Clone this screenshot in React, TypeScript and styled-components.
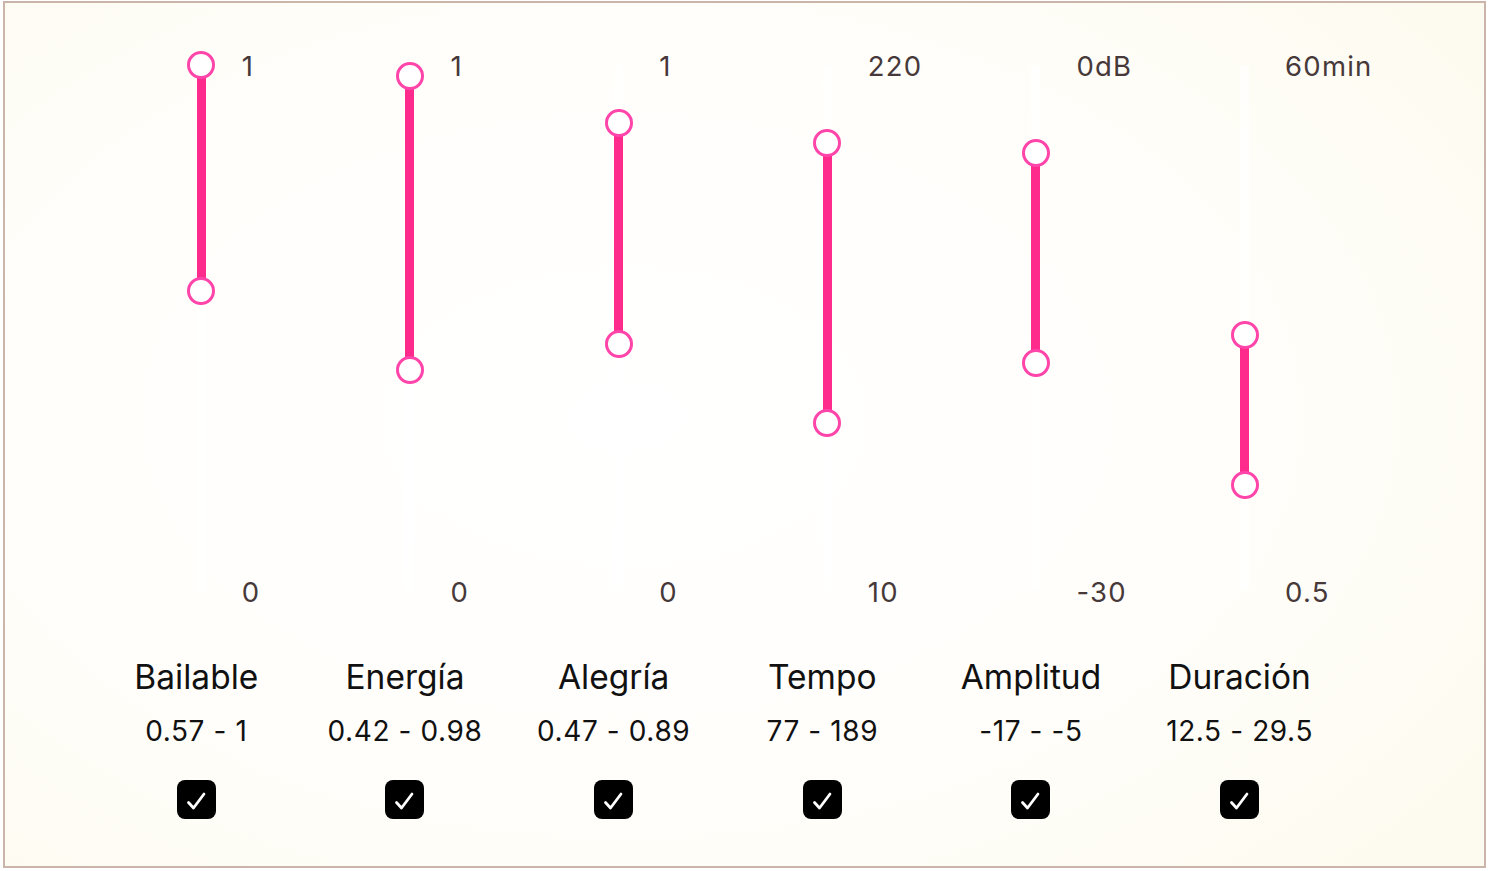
import styled, { createGlobalStyle } from 'styled-components';

interface Feature {
  name: string;
  min: number;
  max: number;
  minLabel: string;
  maxLabel: string;
  low: number;
  high: number;
}

const TRACK_HEIGHT = 526;

const features: Feature[] = [
  { name: 'Bailable', min: 0, max: 1, minLabel: '0', maxLabel: '1', low: 0.57, high: 1 },
  { name: 'Energía', min: 0, max: 1, minLabel: '0', maxLabel: '1', low: 0.42, high: 0.98 },
  { name: 'Alegría', min: 0, max: 1, minLabel: '0', maxLabel: '1', low: 0.47, high: 0.89 },
  { name: 'Tempo', min: 10, max: 220, minLabel: '10', maxLabel: '220', low: 77, high: 189 },
  { name: 'Amplitud', min: -30, max: 0, minLabel: '-30', maxLabel: '0dB', low: -17, high: -5 },
  { name: 'Duración', min: 0.5, max: 60, minLabel: '0.5', maxLabel: '60min', low: 12.5, high: 29.5 },
];

const GlobalStyle = createGlobalStyle`
  html, body {
    margin: 0;
    padding: 0;
    background: #ffffff;
  }
  body {
    font-family: Inter, "Noto Sans", "DejaVu Sans", sans-serif;
  }
`;

const Panel = styled.div`
  box-sizing: border-box;
  width: 1483px;
  height: 867px;
  margin: 1px 0 0 3px;
  border: 2px solid #cbb5aa;
  background: radial-gradient(
    ellipse 70% 75% at 42% 48%,
    #ffffff 0%,
    #fffefb 55%,
    #fdfbf0 100%
  );
`;

const Row = styled.div`
  display: flex;
  padding: 62px 0 0 87px;
`;

const Column = styled.div`
  width: 208.67px;
  display: flex;
  flex-direction: column;
  align-items: center;
`;

const SliderRow = styled.div`
  width: 100%;
  display: grid;
  grid-template-columns: calc(50% + 0.5px) 9px 1fr;
  height: ${TRACK_HEIGHT}px;
`;

const Track = styled.div`
  grid-column: 2;
  position: relative;
  height: 100%;
  border-radius: 5px;
  background: rgba(255, 255, 255, 0.7);
`;

const Fill = styled.div`
  position: absolute;
  left: 0;
  right: 0;
  background: #ff2b8c;
`;

const Thumb = styled.div`
  position: absolute;
  left: 50%;
  width: 28px;
  height: 28px;
  box-sizing: border-box;
  border: 3.5px solid #ff45a9;
  border-radius: 50%;
  background: #ffffff;
  transform: translate(-50%, -50%);
`;

const Scale = styled.div`
  grid-column: 3;
  display: flex;
  flex-direction: column;
  justify-content: space-between;
  align-items: flex-start;
  margin: -15px 0 -17px;
  padding-left: 36px;
`;

const ScaleLabel = styled.span`
  font-size: 27.5px;
  line-height: 32px;
  letter-spacing: 1.2px;
  color: #47393a;
`;

const Title = styled.div`
  margin-top: 67px;
  font-size: 33.5px;
  line-height: 38px;
  color: #111111;
`;

const Range = styled.div`
  margin-top: 18px;
  font-size: 28px;
  line-height: 34px;
  letter-spacing: 0.6px;
  color: #111111;
`;

const CheckBox = styled.div`
  margin-top: 32px;
  width: 39px;
  height: 39px;
  border-radius: 8px;
  background: #000000;
  display: flex;
  align-items: center;
  justify-content: center;
`;

function RangeSlider({ f }: { f: Feature }) {
  const pos = (v: number) => ((f.max - v) / (f.max - f.min)) * TRACK_HEIGHT;
  const top = pos(f.high);
  const bottom = pos(f.low);
  return (
    <SliderRow>
      <Track>
        <Fill style={{ top, height: bottom - top }} />
        <Thumb style={{ top }} />
        <Thumb style={{ top: bottom }} />
      </Track>
      <Scale>
        <ScaleLabel>{f.maxLabel}</ScaleLabel>
        <ScaleLabel>{f.minLabel}</ScaleLabel>
      </Scale>
    </SliderRow>
  );
}

export default function App() {
  return (
    <>
      <GlobalStyle />
      <Panel>
        <Row>
          {features.map((f) => (
            <Column key={f.name}>
              <RangeSlider f={f} />
              <Title>{f.name}</Title>
              <Range>
                {f.low} - {f.high}
              </Range>
              <CheckBox>
                <svg width="39" height="39" viewBox="0 0 39 39">
                  <polyline
                    points="11.5,22.5 16.5,28 27,14"
                    fill="none"
                    stroke="#ffffff"
                    strokeWidth="2.8"
                    strokeLinecap="round"
                    strokeLinejoin="round"
                  />
                </svg>
              </CheckBox>
            </Column>
          ))}
        </Row>
      </Panel>
    </>
  );
}
